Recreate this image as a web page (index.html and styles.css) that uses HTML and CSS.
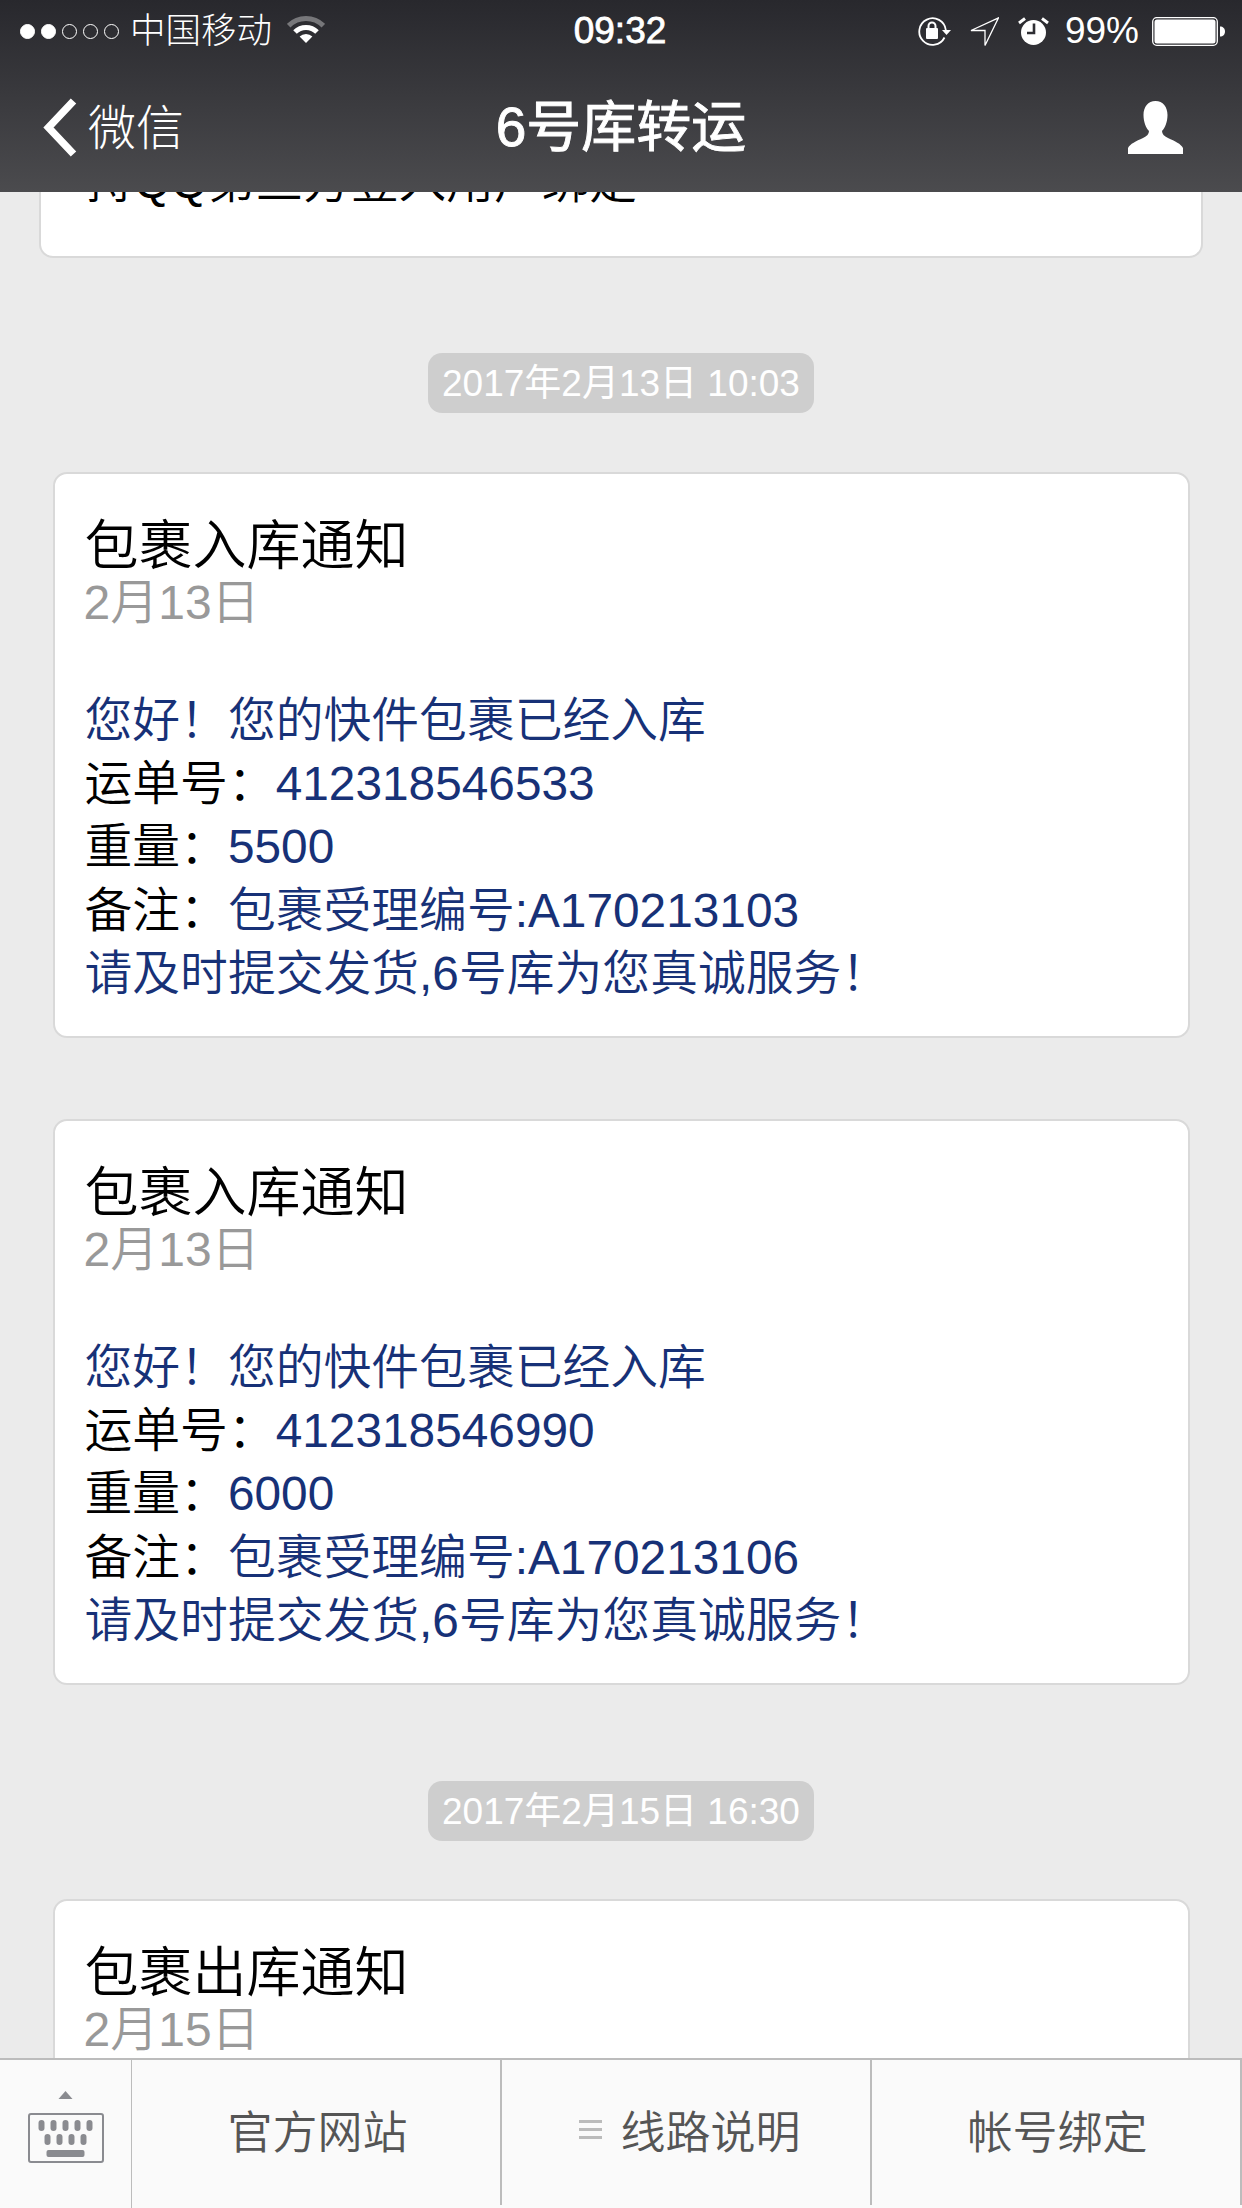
FILE: index.html
```html
<!DOCTYPE html>
<html lang="zh">
<head>
<meta charset="utf-8">
<title>6号库转运</title>
<link rel="stylesheet" href="styles.css">
</head>
<body>
<header class="top">
  <div class="status">
    <div class="status-left">
      <div class="signal"><i class="dot on"></i><i class="dot on"></i><i class="dot"></i><i class="dot"></i><i class="dot"></i></div>
      <span class="carrier">中国移动</span>
      <svg class="wifi" viewBox="0 0 38 27"><path d="M1.7 9.7A24.5 24.5 0 0 1 36.3 9.7" fill="none" stroke="#77777a" stroke-width="5"/><path d="M8 16A15.5 15.5 0 0 1 30 16" fill="none" stroke="#fff" stroke-width="5"/><path d="M19 27L12.6 20.6A9 9 0 0 1 25.4 20.6Z" fill="#fff"/></svg>
    </div>
    <div class="clock">09:32</div>
    <div class="status-right">
      <svg class="ic-lock" viewBox="0 0 35 30"><path d="M29.8 14A13.3 13.3 0 1 0 28.500 21.500" fill="none" stroke="#fff" stroke-width="1.800"/><path d="M26 14h9l-4.500 5z" fill="#fff"/><rect x="10" y="12" width="12" height="11" rx="1" fill="#fff"/><path d="M12.500 13V10a3.500 3.500 0 0 1 7 0v3" fill="none" stroke="#fff" stroke-width="2"/></svg>
      <svg class="ic-loc" viewBox="0 0 29 29"><path d="M28.500 .8L1 13.500H15V28.500Z" fill="none" stroke="#fff" stroke-width="1.300"/></svg>
      <svg class="ic-alarm" viewBox="0 0 31 28"><circle cx="15.500" cy="15.500" r="12.500" fill="#fff"/><path d="M1 6L7 1.500M30 6L24 1.500" stroke="#fff" stroke-width="3"/><path d="M16 6.500V16H9" fill="none" stroke="#2e2e33" stroke-width="2.600"/></svg>
      <span class="pct">99%</span>
      <svg class="ic-batt" viewBox="0 0 73 29"><rect x=".7" y=".7" width="64.600" height="27.600" rx="4" fill="none" stroke="#fff" stroke-width="1.300"/><rect x="2.500" y="2.500" width="61" height="24" rx="2.500" fill="#fff"/><path d="M68 9.500c3 0 5 2 5 5s-2 5-5 5z" fill="#fff"/></svg>
    </div>
  </div>
  <nav class="nav">
    <div class="back">
      <svg class="chevron" viewBox="0 0 34 59"><path d="M30.500 3L5.500 29.500L30.500 56" fill="none" stroke="#fff" stroke-width="7.500"/></svg>
      <span class="back-label">微信</span>
    </div>
    <h1 class="title">6号库转运</h1>
    <div class="nav-right">
      <svg class="person" viewBox="0 0 55 53"><path d="M27.500 0C20 0 15.500 6 15.500 14C15.500 21 18 27 21 30C21 33 19 35 15 37C8 40 2 43 0 47V53H55V47C53 43 47 40 40 37C36 35 34 33 34 30C37 27 39.500 21 39.500 14C39.500 6 35 0 27.500 0Z" fill="#fff"/></svg>
    </div>
  </nav>
</header>

<main class="chat">
  <section class="card-cut">持QQ第三方登入用户绑定</section>

  <div class="stamp">2017年2月13日 10:03</div>
  <article class="card">
    <h2 class="card-title">包裹入库通知</h2>
    <p class="card-date">2月13日</p>
    <div class="card-body">
      <p class="line blue">您好！您的快件包裹已经入库</p>
      <p class="line">运单号：<span class="blue">412318546533</span></p>
      <p class="line">重量：<span class="blue">5500</span></p>
      <p class="line">备注：<span class="blue">包裹受理编号:A170213103</span></p>
      <p class="line blue">请及时提交发货,6号库为您真诚服务！</p>
    </div>
  </article>

  <article class="card card-next">
    <h2 class="card-title">包裹入库通知</h2>
    <p class="card-date">2月13日</p>
    <div class="card-body">
      <p class="line blue">您好！您的快件包裹已经入库</p>
      <p class="line">运单号：<span class="blue">412318546990</span></p>
      <p class="line">重量：<span class="blue">6000</span></p>
      <p class="line">备注：<span class="blue">包裹受理编号:A170213106</span></p>
      <p class="line blue">请及时提交发货,6号库为您真诚服务！</p>
    </div>
  </article>

  <div class="stamp stamp-late">2017年2月15日 16:30</div>
  <article class="card">
    <h2 class="card-title">包裹出库通知</h2>
    <p class="card-date">2月15日</p>
  </article>
</main>

<footer class="bar">
  <div class="kbd">
    <svg class="kbd-icon" viewBox="0 0 76 72"><path d="M30.500 8L37.500 0L44.500 8Z" fill="#8a8b90"/><rect x="1" y="23" width="74" height="48" rx="2" fill="none" stroke="#8a8b90" stroke-width="2"/><g fill="#8a8b90"><rect x="10.500" y="29" width="6" height="11" rx="3"/><rect x="22.500" y="29" width="6" height="11" rx="3"/><rect x="34.500" y="29" width="6" height="11" rx="3"/><rect x="46.500" y="29" width="6" height="11" rx="3"/><rect x="58.500" y="29" width="6" height="11" rx="3"/><rect x="16.500" y="43" width="6" height="11" rx="3"/><rect x="28.500" y="43" width="6" height="11" rx="3"/><rect x="40.500" y="43" width="6" height="11" rx="3"/><rect x="52.500" y="43" width="6" height="11" rx="3"/><rect x="18.500" y="59" width="38" height="7" rx="2"/></g></svg>
  </div>
  <div class="tab">官方网站</div>
  <div class="tab tab-menu"><span class="menu-lines"><i></i><i></i><i></i></span>线路说明</div>
  <div class="tab">帐号绑定</div>
</footer>
</body>
</html>
```

FILE: styles.css
```css
* { box-sizing: border-box; }
html, body { margin: 0; padding: 0; }
body {
  width: 1242px;
  height: 2208px;
  overflow: hidden;
  display: flex;
  flex-direction: column;
  background: #ebebeb;
  font-family: "Liberation Sans", "Noto Sans CJK SC", sans-serif;
  font-weight: 350;
}
h1, h2, p { margin: 0; font-weight: 350; }
i { display: block; }

.top {
  height: 192px;
  flex: none;
  position: relative;
  z-index: 2;
  color: #fff;
  background: linear-gradient(#28282d, #4b4b4e);
}
.status {
  height: 62px;
  display: grid;
  grid-template-columns: 1fr auto 1fr;
  align-items: center;
  font-size: 36px;
}
.status-left { display: flex; align-items: center; padding-left: 20px; }
.signal { display: flex; gap: 6px; margin-right: 11px; }
.dot { width: 15px; height: 15px; border-radius: 50%; border: 1.500px solid #fff; }
.dot.on { background: #fff; }
.carrier { font-size: 35.500px; line-height: 62px; font-weight: 300; }
.wifi { width: 38px; height: 27px; margin-left: 15px; margin-top: -3px; }
.clock { font-size: 37px; font-weight: 400; -webkit-text-stroke: .8px #fff; margin-left: -2px; }
.status-right { display: flex; align-items: center; justify-content: flex-end; padding-right: 17px; }
.ic-lock { width: 35px; height: 30px; }
.ic-loc { width: 29px; height: 29px; margin-left: 19px; }
.ic-alarm { width: 31px; height: 28px; margin-left: 19px; }
.pct { font-size: 37px; margin-left: 16px; font-weight: 400; }
.ic-batt { width: 73px; height: 29px; margin-left: 13px; }

.nav {
  height: 130px;
  display: grid;
  grid-template-columns: 1fr auto 1fr;
  align-items: center;
}
.back { display: flex; align-items: center; padding-left: 43px; }
.chevron { width: 34px; height: 59px; }
.back-label { font-size: 48px; line-height: 60px; margin: 3px 0 0 11px; font-weight: 300; }
.title { font-size: 55px; line-height: 130px; font-weight: 400; -webkit-text-stroke: .9px #fff; }
.nav-right { display: flex; justify-content: flex-end; padding-right: 59px; }
.person { width: 55px; height: 53px; }

.chat {
  flex: 1;
  min-height: 0;
  overflow: hidden;
  display: flex;
  flex-direction: column;
  align-items: center;
}
.card-cut {
  flex: none;
  width: 1164px;
  margin: -42px 0 -1px;
  padding: 0 45px;
  height: 108px;
  font-size: 47.700px;
  line-height: 64px;
  color: #000;
  background: #fff;
  border: 2px solid #d9d9d9;
  border-top: 0;
  border-radius: 14px;
}
.stamp {
  flex: none;
  height: 60px;
  margin: 96px 0 59px;
  padding: 0 14.500px;
  border-radius: 14px;
  background: #cecece;
  color: #fff;
  font-size: 37px;
  font-weight: 400;
  line-height: 62px;
  white-space: nowrap;
}
.stamp-late { margin-bottom: 58px; }
.card {
  flex: none;
  width: 1137px;
  padding: 42px 29px 31px 30px;
  background: #fff;
  border: 2px solid #d9d9d9;
  border-radius: 14px;
}
.card-next { margin-top: 81px; }
.card-title { font-size: 54px; line-height: 60px; color: #000; }
.card-date { font-size: 48px; line-height: 54px; color: #999; margin-left: -1px; }
.card-body { margin-top: 59px; }
.line { font-size: 47.800px; line-height: 63.200px; color: #000; white-space: nowrap; }
.blue { color: #173177; }

.bar {
  flex: none;
  height: 150px;
  display: grid;
  grid-template-columns: 132px 370px 370px 370px;
  background: #fafafa;
  border-top: 2px solid #bcbcbc;
  position: relative;
  z-index: 2;
}
.kbd { border-right: 1px solid #bcbcbc; display: flex; justify-content: center; padding-top: 31px; }
.kbd-icon { width: 76px; height: 72px; margin-left: 1px; }
.tab {
  height: 145px;
  display: flex;
  align-items: center;
  justify-content: center;
  padding: 0 0 6px 3px;
  font-size: 45px;
  color: #555;
  border-right: 2px solid #bcbcbc;
}
.tab-menu { padding-left: 8px; }
.menu-lines { display: flex; flex-direction: column; gap: 5px; margin-right: 18px; }
.menu-lines i { width: 23px; height: 3px; background: #bbb; }
```
